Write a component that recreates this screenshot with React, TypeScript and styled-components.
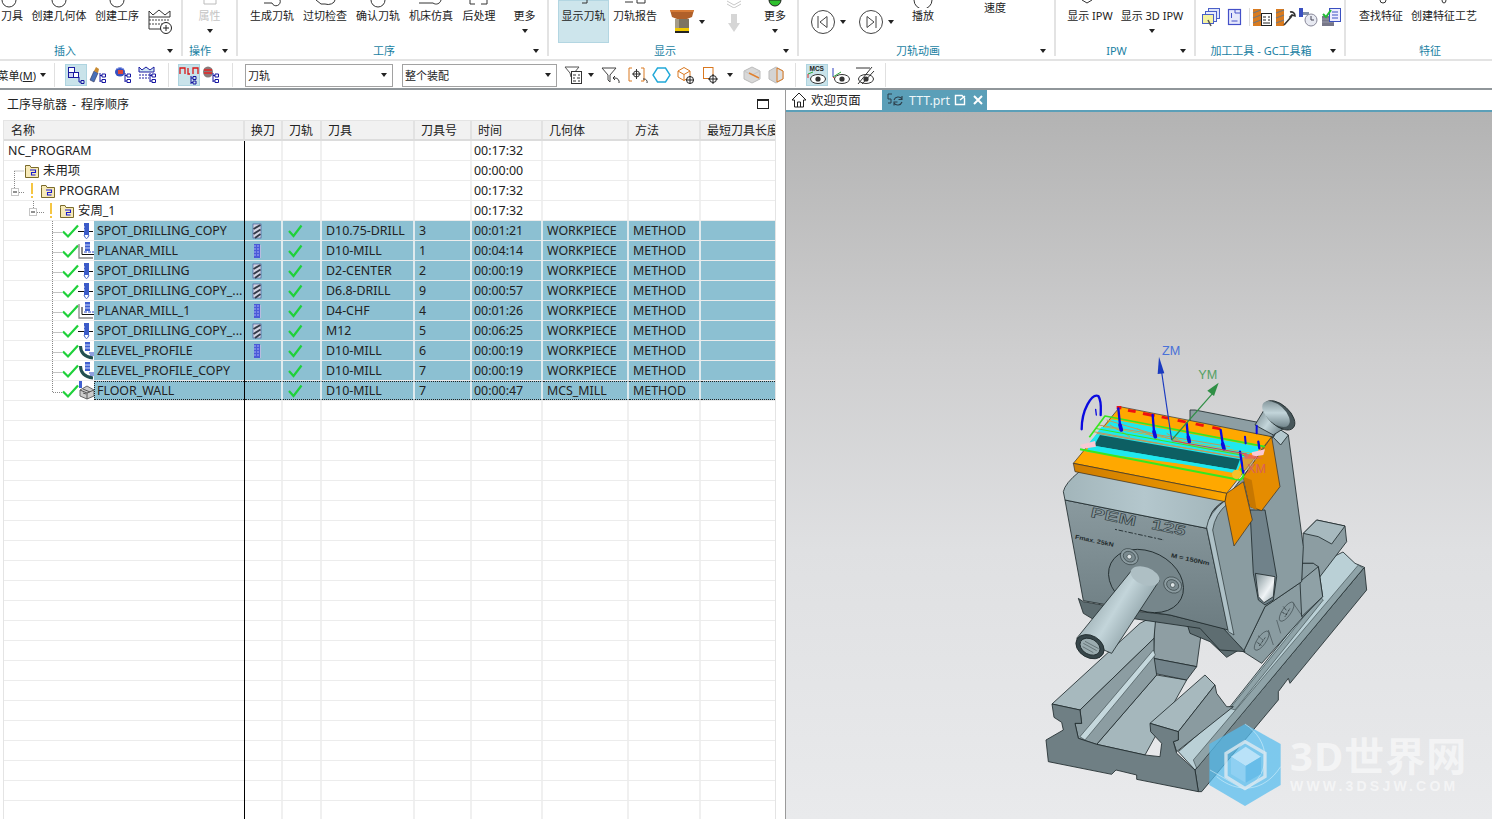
import React from "react";
import styled, { createGlobalStyle } from "styled-components";

const Global = createGlobalStyle`
  html, body { margin: 0; padding: 0; background: #fff; overflow: hidden; }
  body { font-family: "Noto Sans", "Noto Sans CJK SC", "Liberation Sans", sans-serif; color: #222; }
  #root { width: 1492px; height: 819px; overflow: hidden; }
`;

const Page = styled.div`
  width: 1492px; height: 819px; display: flex; flex-direction: column; overflow: hidden;
`;
const Ribbon = styled.div`
  display: flex; height: 59px; flex: none; background: #fff; border-bottom: 2px solid #e3e3e3; box-sizing: content-box;
`;
const Group = styled.div<{ $w: number; $last?: boolean }>`
  width: ${p => p.$w}px; flex: none; display: flex; flex-direction: column; box-sizing: border-box;
  height: 56px;
  border-right: ${p => (p.$last ? "none" : "2px solid #e3e3e3")};
`;
const Items = styled.div<{ $pad?: number }>`
  display: flex; height: 43px; flex: none; padding-left: ${p => p.$pad || 0}px;
  margin-bottom: 1px;
`;
const Item = styled.div<{ $w: number; $sel?: boolean; $dis?: boolean }>`
  width: ${p => p.$w}px; flex: none; display: flex; flex-direction: column; align-items: center; box-sizing: border-box;
  font-size: 11px; line-height: 16px; white-space: nowrap;
  color: ${p => (p.$dis ? "#c4c4c4" : "#222")};
  background: ${p => (p.$sel ? "#cde5ec" : "transparent")};
  ${p => p.$sel && "box-shadow: inset 0 0 0 1px #b3d6e2;"}
`;
const Stub = styled.svg`
  display: block; flex: none; width: 24px; height: 8px;
`;
const Drop = styled.span<{ $c?: string; $m?: number }>`
  display: inline-block; width: 0; height: 0; flex: none;
  border-left: 3.5px solid transparent; border-right: 3.5px solid transparent;
  border-top: 4px solid ${p => p.$c || "#222"};
  margin-top: ${p => p.$m ?? 0}px;
`;
const LabelRow = styled.div<{ $arrow?: number }>`
  display: flex; align-items: center; height: 13px; padding-right: ${p => p.$arrow ?? 8}px;
`;
const GroupLabel = styled.span<{ $w: number }>`
  width: ${p => p.$w}px; flex: none; text-align: center; color: #1a7fa3; font-size: 11px; line-height: 13px; white-space: nowrap;
`;
const Grow = styled.span`flex: 1;`;
const IconCell = styled.div<{ $w: number; $top?: number }>`
  width: ${p => p.$w}px; flex: none; display: flex; align-items: ${p => (p.$top !== undefined ? "flex-start" : "center")};
  justify-content: center; height: 43px; box-sizing: border-box; padding-top: ${p => p.$top ?? 0}px;
`;
const DropRight = styled.div`
  display: flex; align-items: center; gap: 4px;
`;
const ColCell = styled.div<{ $w: number }>`
  width: ${p => p.$w}px; flex: none; display: flex; flex-direction: column; align-items: center;
`;
const SpeedText = styled.span`
  font-size: 11px; line-height: 16px;
`;
const ToolSep = styled.span`
  width: 1px; height: 18px; background: #ddd; flex: none; display: block;
`;

/* toolbar */
const Toolbar = styled.div`
  display: flex; align-items: center; height: 26px; padding-top: 1px; flex: none; background: #fff; border-bottom: 2px solid #90969a;
`;
const Slot = styled.div<{ $w: number; $sel?: boolean }>`
  width: ${p => p.$w}px; height: 22px; flex: none; display: flex; align-items: center; justify-content: center;
  box-sizing: border-box;
  background: ${p => (p.$sel ? "#c9e3ea" : "transparent")};
  ${p => p.$sel && "box-shadow: inset 0 0 0 1px #aed4e0;"}
`;
const Sep = styled.span`
  width: 1px; height: 24px; flex: none; background: #e0e0e0;
`;
const MenuText = styled.div`
  width: 36px; flex: none; overflow: hidden; white-space: nowrap; font-size: 11px; direction: rtl; text-align: left;
  span { direction: ltr; display: inline-block; }
  u { text-underline-offset: 1px; }
`;
const Select = styled.div<{ $w: number }>`
  width: ${p => p.$w}px; height: 23px; flex: none; box-sizing: border-box; border: 1px solid #a2a2a2;
  display: flex; align-items: center; justify-content: space-between; padding: 0 5px 0 2px; font-size: 11px;
`;

/* main */
const Main = styled.div`
  flex: 1; display: flex; min-height: 0;
`;
const Navigator = styled.div`
  width: 785px; flex: none; display: flex; flex-direction: column; background: #fff; border-right: 1px solid #9a9a9a; box-sizing: content-box;
`;
const NavTitle = styled.div`
  height: 30px; flex: none; display: flex; align-items: center; justify-content: space-between;
  padding: 0 16px 2px 7px; font-size: 12px; box-sizing: border-box; word-spacing: 2px;
`;
const MaxBox = styled.span`
  width: 12px; height: 10px; border: 1px solid #222; border-top-width: 2px; box-sizing: border-box; display: block;
`;
const Table = styled.div`
  margin-left: 3px; width: 773px; flex: 1; border: 1px solid #e4e4e4; border-bottom: none; box-sizing: border-box; overflow: hidden;
`;
const cols = "241px 38px 39px 93px 57px 71px 86px 72px 74px";
const Header = styled.div`
  display: grid; grid-template-columns: ${cols}; height: 20px; background: #f1f1f1; border-bottom: 2px solid #dcdcdc; box-sizing: border-box;
`;
const HeadCell = styled.div`
  font-size: 12px; line-height: 19px; padding-left: 6px; border-right: 2px solid #e2e2e2; white-space: nowrap; overflow: hidden;
  &:first-child { padding-left: 7px; }
  &:last-child { border-right: none; }
`;
const Row = styled.div`
  display: grid; grid-template-columns: ${cols}; height: 20px; box-sizing: border-box; border-bottom: 1px solid #ececec;
`;
const NameCell = styled.div`
  display: flex; align-items: flex-start; border-right: 1px solid #000; min-width: 0; height: 20px; margin-bottom: -1px;
`;
const NameLabel = styled.div<{ $sel?: boolean; $focus?: boolean }>`
  flex: 1; min-width: 0; height: 19px; line-height: 19px; font-size: 12.4px; white-space: nowrap; overflow: hidden; padding-left: 3px; box-sizing: border-box;
  background: ${p => (p.$sel ? "#8cc0d2" : "transparent")};
  ${p => p.$focus && "border-top: 1px dotted #222; border-bottom: 1px dotted #222; border-left: 1px dotted #222; line-height: 17px; padding-left: 2px;"}
`;
const Cell = styled.div<{ $sel?: boolean; $pad?: number; $focus?: boolean }>`
  height: 19px; line-height: 19px; font-size: 12.4px; white-space: nowrap; overflow: hidden; box-sizing: border-box;
  padding-left: ${p => p.$pad ?? 4}px; border-right: 2px solid ${p => (p.$sel ? "#dfeaee" : "#f0f0f0")};
  background: ${p => (p.$sel ? "#8cc0d2" : "transparent")};
  display: flex; align-items: center;
  ${p => p.$focus && "border-top: 1px dotted #222; border-bottom: 1px dotted #222;"}
  &:last-child { border-right: none; }
`;
const Gutter = styled.svg<{ $w: number }>`
  width: ${p => p.$w}px; height: 20px; flex: none; display: block; overflow: visible;
`;

/* viewer */
const Viewer = styled.div`
  flex: 1; display: flex; flex-direction: column; min-width: 0;
`;
const Tabs = styled.div`
  height: 22px; flex: none; display: flex; background: #fff; box-sizing: border-box; border-bottom: 2px solid #5b9fb8;
`;
const Tab = styled.div<{ $w: number; $active?: boolean }>`
  width: ${p => p.$w}px; height: 20px; flex: none; display: flex; align-items: center; font-size: 12.4px; box-sizing: border-box; white-space: nowrap;
  gap: 4px; padding-left: 5px;
  background: ${p => (p.$active ? "#5b9fb8" : "#fff")};
  color: ${p => (p.$active ? "#eef6f9" : "#222")};
`;
const Stage = styled.div`
  flex: 1; position: relative; overflow: hidden; background: linear-gradient(180deg, #b3b3b3 0%, #cfcfd0 35%, #dfe0e2 62%, #e9eaec 100%);
`;
const Scene = styled.svg`
  position: absolute; left: 0; top: 0; width: 706px; height: 707px;
`;
const Watermark = styled.div`
  position: absolute; left: 504px; top: 623px; display: flex; flex-direction: column;
  color: rgba(255,255,255,.55); font-weight: 700; white-space: nowrap;
`;
const MarkBig = styled.div`
  font-family: "Noto Sans", "Noto Sans CJK SC", sans-serif; font-size: 40px; line-height: 42px; height: 43px; letter-spacing: 1px;
`;
const MarkSmall = styled.div`
  font-family: "Liberation Sans", sans-serif; font-size: 14px; line-height: 16px; letter-spacing: 3.2px;
`;

/* icons */
const Arc = ({ d = "M5 0 A7 7 0 0 0 19 0" }: { d?: string }) => (
  <Stub viewBox="0 0 24 8"><path d={d} fill="none" stroke="#333" strokeWidth="1" /></Stub>
);
const Blank = () => <Stub viewBox="0 0 24 8" />;

const S = ({ children, w = 20, h = 20 }: { children: React.ReactNode; w?: number; h?: number }) => (
  <svg width={w} height={h} viewBox={`0 0 ${w} ${h}`} style={{ display: "block", flex: "none" }}>{children}</svg>
);

const CavityIcon = () => (
  <S w={26} h={30}>
    <path d="M2 6 L6 10 L12 5 L18 10 L23 6 V12 H2 Z" fill="none" stroke="#333" />
    <path d="M2 15 H23 M2 19 H23" stroke="#444" strokeWidth="1.2" strokeDasharray="2 1" />
    <path d="M2 12 V24 H14" fill="none" stroke="#333" />
    <circle cx="19" cy="23" r="5.5" fill="#fff" stroke="#222" />
    <path d="M16 23 H22 M19 20 V26" stroke="#222" />
  </S>
);
const ToolStack = () => (
  <S w={26} h={24}>
    <path d="M7 15 L13 24 L19 15 H16 V6 H10 V15 Z" fill="#d6d6d6" />
  </S>
);
const CutterIcon = () => (
  <S w={26} h={25}>
    <path d="M1 1 H25 L23 8 L18 10 H8 L3 8 Z" fill="#b0602a" />
    <path d="M1 1 H25 L24 3 H2 Z" fill="#d67a36" />
    <rect x="6" y="10" width="14" height="9" fill="#7d7462" />
    <rect x="6" y="10" width="4" height="9" fill="#a59c88" />
    <rect x="6" y="19" width="14" height="3" fill="#f0c800" />
    <rect x="6" y="22" width="14" height="2" fill="#222" />
  </S>
);
const Nav = ({ next }: { next?: boolean }) => (
  <S w={26} h={26}>
    <circle cx="13" cy="13" r="11.5" fill="#fff" stroke="#444" />
    {next ? <path d="M9 7.5 L16 13 L9 18.5 Z M18 7 V19" fill="none" stroke="#444" /> : <path d="M17 7.5 L10 13 L17 18.5 Z M8 7 V19" fill="none" stroke="#444" />}
  </S>
);

const TreeIc = ({ kind }: { kind: number }) => {
  const tree = <path d="M12 9 V18 M12 11.5 H14 M12 17 H14 M14 10 h3.5 v3 h-3.5 z M14 15.5 h3.5 v3 h-3.5 z" fill="none" stroke="#1414a0" />;
  return (
    <S w={22} h={22}>
      {kind === 0 && <><rect x="3.5" y="3.5" width="6" height="5" fill="#fff" stroke="#1a1aa0" /><rect x="3.5" y="8.5" width="6" height="5" fill="#cdd3f2" stroke="#1a1aa0" /><rect x="8.5" y="8.5" width="5" height="5" fill="#fff" stroke="#1a1aa0" /><path d="M14 13 V18 H16 M16 16.5 h3 v3 h-3z" fill="none" stroke="#1414a0" /></>}
      {kind === 1 && <><path d="M2 16 L6 7 L10 9 L6 18 Z" fill="#4870b8" stroke="#335" strokeWidth=".6" /><path d="M6 7 L8 3 L11 5 L10 9 Z" fill="#c88a30" />{tree}</>}
      {kind === 2 && <><ellipse cx="7" cy="8" rx="5" ry="4.5" fill="#3650c0" /><rect x="5" y="6" width="5" height="4" fill="#d9463c" /><path d="M3 5 Q7 2 11 5" stroke="#8fa0e8" fill="none" />{tree}</>}
      {kind === 3 && <><path d="M1 3 L4 6 L8 3 L12 6 L16 3 V8 H1 Z" fill="#cfe6f2" stroke="#1a1aa0" /><path d="M1 11 H14 M1 14 H11" stroke="#1a1aa0" strokeDasharray="2 1" />{tree}</>}
      {kind === 4 && <><path d="M2 10 V4 H7 V10 M10 4 V10 H12 M15 10 V4 H20 V10" fill="none" stroke="#d81818" strokeWidth="1.3" /><path d="M13 12 V20 M13 14 H15 M13 18.5 H15 M15 12.5 h3 v3 h-3 z M15 17 h3 v3 h-3 z" fill="none" stroke="#1414a0" /></>}
      {kind === 5 && <><ellipse cx="7" cy="8" rx="5" ry="5.5" fill="#8a7a7a" /><path d="M3 6 H11 M3 9 H11" stroke="#d03838" strokeWidth="1.8" />{tree}</>}
    </S>
  );
};
const FilterIc = ({ kind }: { kind: number }) => (
  <S w={24} h={20}>
    {kind === 0 && <><path d="M2 2 H16 L11 8 V12 L8 12 L7 8 Z" fill="none" stroke="#555" /><rect x="8.5" y="6.5" width="10" height="12" fill="#fff" stroke="#333" /><path d="M10 10 h3 M15 10 h2 M10 13 h2 M14 13 h3 M10 16 h3 M15 16 h2" stroke="#333" /></>}
    {kind === 1 && <><path d="M3 3 H17 L11 10 V17 L9 15 V10 Z" fill="#fff" stroke="#444" /><path d="M20 18 a4 4 0 0 0 -4 -5 l-2 0 m2 -2 l-2 2 l2 2" fill="none" stroke="#333" /></>}
    {kind === 2 && <><path d="M7 3 H4 V16 H7 M16 3 H19 V16 H16" fill="none" stroke="#d97820" /><circle cx="11.5" cy="9" r="3" fill="none" stroke="#333" /><path d="M7 9 H16 M11.5 4 V14" stroke="#333" /><path d="M22 18 a3 3 0 0 0 -3 -4 l-1 0" fill="none" stroke="#333" /></>}
    {kind === 3 && <path d="M7.5 3 H15.5 L20 10 L15.5 17 H7.5 L3 10 Z" fill="none" stroke="#20a8d8" strokeWidth="1.4" />}
    {kind === 4 && <><path d="M3 6 L9 2.5 L15 6 V12 L9 15.5 L3 12 Z M3 6 L9 9.5 L15 6 M9 9.5 V15.5" fill="#fff" stroke="#d97820" /><circle cx="15" cy="15" r="3.5" fill="#fff" stroke="#222" /><path d="M11 15 H19 M15 11 V19" stroke="#222" /></>}
    {kind === 5 && <><rect x="2.5" y="2.5" width="9.5" height="11" fill="#fff" stroke="#d97820" /><circle cx="12" cy="14" r="3.5" fill="#fff" stroke="#222" /><path d="M7 14 H17 M12 9 V19" stroke="#222" /></>}
    {kind === 6 && <><path d="M4 6 L12 2 L20 6 V14 L12 18 L4 14 Z" fill="#d8d8d8" stroke="#bbb" /><path d="M4 6 L12 10 L20 6" fill="none" stroke="#c6c6c6" /><path d="M9 8 L19 13" stroke="#e08030" strokeWidth="1.4" /></>}
    {kind === 7 && <><path d="M5 6 L12 2 L19 6 V14 L12 18 L5 14 Z" fill="#d4d4d4" stroke="#bbb" /><path d="M13 3 L19 6 V14 L13 17 Z" fill="#ddd" stroke="#d97820" /></>}
  </S>
);
const Mcs = ({ kind }: { kind: number }) => (
  <S w={24} h={22}>
    {kind === 0 && <text x="4.5" y="7" fontSize="6.5" fontWeight="700" fill="#222" fontFamily="Liberation Sans">MCS</text>}
    {kind === 1 && <><path d="M4 4 V13" stroke="#3040c0" /><path d="M4 13 L12 8" stroke="#2aa838" /><path d="M4 13 L8 16" stroke="#d83030" /></>}
    {kind === 0 && <><path d="M3 10 L8 8" stroke="#2aa838" /><path d="M3 10 V14" stroke="#d83030" /></>}
    <ellipse cx="13" cy="15" rx="7.5" ry="4.5" fill="#fff" stroke="#333" />
    <circle cx="13" cy="15" r="2.6" fill="#333" />
    {kind === 2 && <path d="M5 20 L19 3 M3 4 H17 M9 20 L21 7" stroke="#333" />}
  </S>
);
const CadIc = ({ kind }: { kind: number }) => (
  <S w={23} h={22}>
    {kind === 0 && <><rect x="9.5" y="2.5" width="11" height="10" fill="#dfe4f8" stroke="#4a60c8" /><rect x="6.5" y="5.5" width="11" height="10" fill="#e8ecfb" stroke="#4a60c8" /><rect x="3.5" y="8.5" width="11" height="9" fill="#f5f3a0" stroke="#4a60c8" /><path d="M9 14 L12 20" stroke="#555" strokeWidth="1.5" /></>}
    {kind === 1 && <><rect x="5.5" y="3.5" width="12" height="15" fill="#e6e8fb" stroke="#4450c8" strokeWidth="1.2" /><path d="M8.5 7 V12 M8.5 15 H14.5 M12 3.5 V7 H17" fill="none" stroke="#4450c8" /></>}
    {kind === 2 && <><rect x="2" y="3" width="8" height="17" fill="#d97b20" /><path d="M2 7 L10 4 M2 12 L10 9 M2 17 L10 14" stroke="#777" strokeWidth="1.2" /><rect x="10.5" y="7.5" width="10" height="12" fill="#fff" stroke="#222" /><path d="M12 11 h3 M17 11 h2 M12 14 h3 M17 14 h2 M12 17 h7" stroke="#222" /></>}
    {kind === 3 && <><rect x="2" y="3" width="8" height="17" fill="#d97b20" /><path d="M2 7 L10 4 M2 12 L10 9 M2 17 L10 14" stroke="#777" strokeWidth="1.2" /><path d="M10 19 L18 10 M16 6 a4 4 0 0 1 5 4 l-3 -1 l-2 2 l1 1" fill="none" stroke="#333" strokeWidth="1.6" /></>}
    {kind === 4 && <><rect x="2" y="2" width="4" height="9" fill="#3a50c0" /><rect x="6" y="6" width="6" height="3" fill="#8090a8" /><circle cx="14" cy="14" r="6" fill="#e8eaf2" stroke="#889" /><path d="M14 10 V14 H17" stroke="#445" fill="none" /></>}
    {kind === 5 && <><rect x="2" y="10" width="12" height="10" fill="#778" /><path d="M2 13 H14 M2 16 H14" stroke="#99a" /><rect x="9.5" y="2.5" width="11" height="13" fill="#eef" stroke="#3a50c0" /><path d="M12 6 H18 M12 9 H18 M12 12 H18" stroke="#3a50c0" /><path d="M3 8 L6 11 L11 4" stroke="#22bb33" strokeWidth="2" fill="none" /></>}
  </S>
);

const Folder = ({ x }: { x: number }) => (
  <g transform={`translate(${x},4)`}>
    <path d="M0.5 2.5 V0.5 H5 L6 2.5 H13.5 V12.5 H0.5 Z" fill="#f7eab8" stroke="#7a6a2a" />
    <path d="M5 5 H10.5 V7.5 H6.5 V10 H10.5" fill="none" stroke="#1a1ad0" strokeWidth="1.1" />
  </g>
);
const Minus = ({ x }: { x: number }) => (
  <g>
    <rect x={x + .5} y="7.5" width="7" height="7" fill="#fff" stroke="#c6c6c6" />
    <path d={`M${x + 2} 11 H${x + 6}`} stroke="#222" />
  </g>
);
const dotted = { stroke: "#888", strokeDasharray: "1 1", fill: "none" } as const;
const Bang = ({ x }: { x: number }) => (
  <g fill="#f5c542"><rect x={x} y="2" width="2" height="11" /><rect x={x} y="15" width="2" height="2" /></g>
);

const OpIcon = ({ t }: { t: string }) => {
  if (t === "d")
    return (
      <g transform="translate(74,2)">
        <path d="M0 8.5 H15" stroke="#111" />
        <rect x="6" y="0" width="5" height="12" fill="#3a5ac8" />
        <path d="M6 4 H7 M6 7 H7" stroke="#cfd8ff" />
        <path d="M6 12 Q8.5 19 11 12" fill="#fff" stroke="#3a5ac8" />
      </g>
    );
  if (t === "p")
    return (
      <g transform="translate(74,0)">
        <path d="M1 3 V17 H15" fill="none" stroke="#888" strokeWidth="1.3" />
        <path d="M4 13.5 H16 M4 6 V13.5" fill="none" stroke="#111" />
        <path d="M6 11 H16" stroke="#2040c0" strokeDasharray="3 1" />
        <rect x="7" y="1" width="5" height="9" fill="#4060d0" />
        <path d="M7 4 h5 M7 7 h5" stroke="#cfd8ff" />
      </g>
    );
  if (t === "z")
    return (
      <g transform="translate(74,0)">
        <path d="M2.5 5 C2.5 12 7 16 15 17" fill="none" stroke="#245050" strokeWidth="3" />
        <rect x="7" y="1" width="5" height="9" fill="#4060d0" />
        <path d="M7 4 h5 M7 7 h5" stroke="#cfd8ff" />
        <path d="M11 12 H16 M12 14 H16" stroke="#2040c0" />
      </g>
    );
  return (
    <g transform="translate(75,0)">
      <rect x="0" y="0" width="3" height="7" fill="#4060d0" />
      <path d="M1 9 L8 5 L15 9 V15 L8 18 L1 15 Z" fill="#ccc" stroke="#666" />
      <path d="M1 9 L8 12 L15 9 M8 12 V18 M4 8 L11 11 M4 12 L7 13" fill="none" stroke="#555" />
    </g>
  );
};

const Check = ({ x = 59 }: { x?: number }) => (
  <path d={`M${x} 10.5 L${x + 5} 15.5 L${x + 15} 4.5`} fill="none" stroke="#1fd13a" strokeWidth="2.2" />
);

const DrillTool = () => (
  <S w={12} h={16}>
    <rect x="2" y="1" width="8" height="14" fill="#d2d4e2" stroke="#3a4a90" strokeWidth=".6" />
    <path d="M2.5 6 L9.5 2 M2.5 11 L9.5 6.5 M4 15 L9.5 11" stroke="#333a48" strokeWidth="1.9" />
  </S>
);
const MillTool = () => (
  <S w={12} h={16}>
    <rect x="3" y="1" width="6" height="14" fill="#4a5ad8" />
    <path d="M3 3 h6 M3 6 h6 M3 9 h6 M3 12 h6" stroke="#a4b0f4" strokeDasharray="2 1" />
    <path d="M9.5 2 v13" stroke="#b8bce0" />
  </S>
);
const PathCheck = () => (
  <S w={18} h={16}>
    <path d="M3 8 L7.5 13 L15.5 2.5" fill="none" stroke="#1fd13a" strokeWidth="2.2" />
  </S>
);

const MiniTabIc = () => (
  <S w={16} h={16}>
    <path d="M8 1 L1 8 H3.5 V15 H12.5 V8 H15 Z M6.5 15 V10 H9.5 V15" fill="#fff" stroke="#222" />
  </S>
);
const PartIc = () => (
  <S w={18} h={16}>
    <path d="M5 2 H1 V7 H4 V11 H1" fill="none" stroke="#2c3e4a" />
    <path d="M7 8 a4.5 4.5 0 0 1 8 -1 M15 10 a4.5 4.5 0 0 1 -8 1 M15 4 V7.5 H11.5 M7 13.5 V10 H10.5" fill="none" stroke="#2c3e4a" strokeWidth="1.1" />
  </S>
);

type Op = { name: string; icon: string; tool: string; toolIc?: "d" | "m"; no: string; time: string; geo: string };
const ops: Op[] = [
  { name: "SPOT_DRILLING_COPY", icon: "d", toolIc: "d", tool: "D10.75-DRILL", no: "3", time: "00:01:21", geo: "WORKPIECE" },
  { name: "PLANAR_MILL", icon: "p", toolIc: "m", tool: "D10-MILL", no: "1", time: "00:04:14", geo: "WORKPIECE" },
  { name: "SPOT_DRILLING", icon: "d", toolIc: "d", tool: "D2-CENTER", no: "2", time: "00:00:19", geo: "WORKPIECE" },
  { name: "SPOT_DRILLING_COPY_...", icon: "d", toolIc: "d", tool: "D6.8-DRILL", no: "9", time: "00:00:57", geo: "WORKPIECE" },
  { name: "PLANAR_MILL_1", icon: "p", toolIc: "m", tool: "D4-CHF", no: "4", time: "00:01:26", geo: "WORKPIECE" },
  { name: "SPOT_DRILLING_COPY_...", icon: "d", toolIc: "d", tool: "M12", no: "5", time: "00:06:25", geo: "WORKPIECE" },
  { name: "ZLEVEL_PROFILE", icon: "z", toolIc: "m", tool: "D10-MILL", no: "6", time: "00:00:19", geo: "WORKPIECE" },
  { name: "ZLEVEL_PROFILE_COPY", icon: "z", tool: "D10-MILL", no: "7", time: "00:00:19", geo: "WORKPIECE" },
  { name: "FLOOR_WALL", icon: "f", tool: "D10-MILL", no: "7", time: "00:00:47", geo: "MCS_MILL" },
];
const heads = ["名称", "换刀", "刀轨", "刀具", "刀具号", "时间", "几何体", "方法", "最短刀具长度"];

const EmptyCells = ({ time }: { time?: string }) => (
  <>
    <Cell /><Cell /><Cell /><Cell />
    <Cell $pad={2}>{time}</Cell>
    <Cell /><Cell /><Cell />
  </>
);

const edge = { stroke: "#1f2a2c", strokeWidth: 2.5, strokeLinejoin: "round" } as const;

const Vise = () => (
  <Scene viewBox="786 112 706 707">
    <defs>
      <linearGradient id="cyl" x1="0" y1="0" x2="1" y2="0.6">
        <stop offset="0" stopColor="#6f8085" />
        <stop offset=".55" stopColor="#c3d5da" />
        <stop offset="1" stopColor="#768a90" />
      </linearGradient>
      <linearGradient id="plate" x1="0" y1="0" x2="0" y2="1">
        <stop offset="0" stopColor="#8a9a9f" />
        <stop offset="1" stopColor="#6c7c81" />
      </linearGradient>
      <linearGradient id="hole" x1="0" y1="0" x2="1" y2="1">
        <stop offset="0" stopColor="#7d8f94" />
        <stop offset=".6" stopColor="#f0f4f6" />
        <stop offset="1" stopColor="#92a4a9" />
      </linearGradient>
      <linearGradient id="bevel" x1="0" y1="0" x2="1" y2="0">
        <stop offset="0" stopColor="#a2b5ba" />
        <stop offset=".5" stopColor="#b4c7cd" />
        <stop offset="1" stopColor="#a2b5ba" />
      </linearGradient>
      <linearGradient id="lip" x1="0" y1="0" x2="1" y2="0">
        <stop offset="0" stopColor="#cf7d00" />
        <stop offset=".75" stopColor="#e89400" />
        <stop offset="1" stopColor="#ffa800" />
      </linearGradient>
    </defs>

    {/* base — reference crop at (1030,560) */}
    <g transform="translate(1030,560) scale(.33333)" {...edge}>
      <polygon points="495,630 1003,22 1010,90 780,370 775,355 745,395 745,420 515,695 505,695" fill="#75868b" />
      <polygon points="445,575 600,440 870,100 860,15 939,-24 975,10 1003,22 495,630" fill="#bad0d6" />
      <polygon points="490,600 985,15 1000,25 500,625" fill="#8fa3a8" strokeWidth="1.5" />
      <polygon points="600,445 870,110 880,120 615,450" fill="#8fa3a8" strokeWidth="1.5" />
      <polygon points="200,553 380,345 470,360 345,585" fill="#a5b7bc" />
      <polygon points="375,170 370,295 500,320 515,210" fill="#8e9ea3" />
      <polygon points="370,295 372,340 470,360 500,320" fill="#72838a" />
      <polygon points="66,432 330,190 378,165 372,235 150,450" fill="#a7b9be" />
      <polygon points="150,450 155,490 135,490 145,535 200,553 380,345 372,290 372,235" fill="#8c9da2" />
      <polygon points="150,530 370,270 376,285 165,540" fill="#c5d8dd" strokeWidth="1.5" />
      <polygon points="360,490 525,345 555,375 445,515" fill="#a7b9be" />
      <polygon points="445,515 445,540 430,545 440,575 610,440 590,440 560,400 555,375" fill="#8a9ba0" />
      <polygon points="48,540 100,510 95,487 72,472 66,432 150,450 155,490 135,490 145,535 200,553 345,585 390,590 395,550 362,515 360,490 445,515 445,540 430,545 440,580 495,630 505,695 320,658 320,645 258,630 245,643 55,605" fill="#6f7f84" />
    </g>

    {/* body right of the plate — reference crop at (1190,400) */}
    <g transform="translate(1190,400) scale(.33333)" {...edge}>
      <polygon points="340,400 380,360 465,378 470,425 390,530 370,490 335,490" fill="#8c9da2" />
      <polygon points="340,400 380,360 465,378 425,432 385,410" fill="#a7b9be" />
      <polygon points="335,490 370,490 385,500 398,590 340,650 215,790 160,755 225,620 335,545" fill="#8a9ca1" />
      <polygon points="335,650 398,590 385,500 330,545" fill="#8fa1a6" />
      <polygon points="0,30 15,30 245,75 250,112 0,70" fill="#8d9ea3" />
      <polygon points="55,345 105,300 250,110 262,85 295,105 340,440 335,545 225,620 160,755 90,690 60,430" fill="#8a9ca1" />
      <polygon points="250,112 265,85 295,105 272,135" fill="#b5c9cf" />
      <polygon points="180,330 225,330 260,530 250,600 225,615 205,600 190,520" fill="#70828a" />
      <polygon points="196,520 255,530 250,590 222,608 205,590" fill="url(#hole)" />
      <polygon points="-10,668 60,680 90,690 155,745 110,772 60,725 0,700" fill="#5e6d71" />
      <polygon points="195,75 225,25 290,80 250,105" fill="url(#cyl)" />
      <ellipse cx="268" cy="46" rx="56" ry="31" transform="rotate(42 268 46)" fill="#47565a" />
      <ellipse cx="258" cy="42" rx="50" ry="27" transform="rotate(42 258 42)" fill="url(#cyl)" stroke="none" />
      <g fill="none" stroke="#2a3538" strokeWidth="1.5">
        <ellipse cx="290" cy="635" rx="13" ry="34" transform="rotate(35 290 635)" />
        <ellipse cx="215" cy="722" rx="13" ry="34" transform="rotate(35 215 722)" />
        <path d="M280 620 L290 632 M275 636 L292 645 M285 650 L300 625 M205 708 L218 720 M200 726 L214 736 M208 738 L226 712" strokeWidth="3" strokeDasharray="3 2" />
        <path d="M310 610 L338 650 M260 660 L272 700 M235 690 L250 735" />
      </g>
    </g>

    {/* front plate and handle — reference crop at (1040,450) */}
    <g transform="translate(1040,450) scale(.33333)" {...edge}>
      <polygon points="115,445 130,455 300,485 390,495 550,535 615,605 540,600 480,535 240,500 180,520 130,490" fill="#5e6d71" />
      <polygon points="75,150 500,235 565,540 390,495 300,482 130,452" fill="url(#plate)" />
      <path d="M118 65 L555 152 Q520 170 510 200 L500 235 L75 150 L70 125 Q75 100 118 65 Z" fill="url(#bevel)" />
      <path d="M500 232 Q505 190 555 152 L562 162 Q525 192 518 240 L582 555 L565 545 Z" fill="#aec1c7" strokeWidth="2" />
      <ellipse cx="318" cy="393" rx="118" ry="88" transform="rotate(27 318 393)" fill="#76868b" />
      <g strokeWidth="1.5">
        <ellipse cx="268" cy="320" rx="28" ry="23" transform="rotate(30 268 320)" fill="#8b9ba0" />
        <ellipse cx="268" cy="320" rx="19" ry="15" transform="rotate(30 268 320)" fill="#7b8b90" />
        <circle cx="268" cy="320" r="7" fill="#dce4e6" />
        <ellipse cx="398" cy="405" rx="28" ry="23" transform="rotate(30 398 405)" fill="#8b9ba0" />
        <ellipse cx="398" cy="405" rx="19" ry="15" transform="rotate(30 398 405)" fill="#7b8b90" />
        <circle cx="398" cy="405" r="7" fill="#dce4e6" />
      </g>
      <polygon points="272,365 358,392 215,610 110,565" fill="url(#cyl)" />
      <ellipse cx="315" cy="378" rx="45" ry="26" transform="rotate(20 315 378)" fill="#aebfc4" stroke="none" />
      <ellipse cx="150" cy="590" rx="45" ry="33" transform="rotate(30 150 590)" fill="#37464a" />
      <ellipse cx="150" cy="590" rx="32" ry="23" transform="rotate(30 150 590)" fill="#9aabaf" />
      <path d="M130 580 L170 602 M135 574 L176 596 M128 590 L160 608" stroke="#4b595c" strokeWidth="2" fill="none" />
      <g stroke="none" fontFamily="Liberation Sans">
        <text x="150" y="200" fontSize="42" fontWeight="700" fill="none" stroke="#2a3538" strokeWidth="1.5" textLength="138" lengthAdjust="spacingAndGlyphs" transform="rotate(12 150 200)">PEM</text>
        <text x="332" y="236" fontSize="42" fontWeight="700" fill="none" stroke="#2a3538" strokeWidth="1.5" textLength="104" lengthAdjust="spacingAndGlyphs" transform="rotate(12 332 236)">125</text>
        <text x="104" y="266" fontSize="18" fontWeight="700" fill="#1f2a2c" textLength="118" lengthAdjust="spacingAndGlyphs" transform="rotate(12 104 266)">Fmax. 25kN</text>
        <text x="392" y="322" fontSize="18" fontWeight="700" fill="#1f2a2c" textLength="118" lengthAdjust="spacingAndGlyphs" transform="rotate(12 392 322)">M = 150Nm</text>
        <path d="M225 238 L372 270" stroke="#2a3538" strokeWidth="3" strokeDasharray="6 5 14 5" fill="none" />
      </g>
    </g>

    {/* workpiece and tool paths — reference crop at (1030,330) */}
    <g transform="translate(1030,330) scale(.33333)" strokeLinejoin="round">
      <polygon points="640,440 725,320 750,470 695,542 660,530" fill="#e58c00" stroke="#2b2b2b" strokeWidth="2" />
      <polygon points="640,440 660,530 680,540 665,450" fill="#c77700" />
      <polygon points="130,400 270,230 725,320 590,490" fill="#ffa800" stroke="#2b2b2b" strokeWidth="2" />
      <polygon points="130,400 590,490 585,515 135,425" fill="url(#lip)" stroke="#2b2b2b" strokeWidth="2" />
      <polygon points="590,490 640,455 667,570 612,648 585,515" fill="#e58c00" stroke="#2b2b2b" strokeWidth="2" />
      <polygon points="180,335 210,300 640,380 620,430 600,420 170,365" fill="#20e8ee" />
      <polygon points="210,315 630,388 618,420 192,347" fill="#0d5f63" />
      <polygon points="192,347 618,420 616,430 185,355" fill="#20e8ee" />
      <polygon points="245,268 690,350 680,372 225,290" fill="#20e8ee" />
      <polygon points="215,290 660,370 650,385 200,310" fill="#20e8ee" />
      <path d="M205 285 L480 330 L600 350 M200 310 L680 390 M230 270 L500 350 L650 375" stroke="#c09a5a" strokeWidth="3" fill="none" />
      <path d="M190 305 L640 385 M240 285 L300 320 M320 295 L390 330 M410 310 L470 345" stroke="#c09a5a" strokeWidth="3" fill="none" />
      <path d="M150 358 L630 450 Q650 440 632 415" stroke="#35e820" strokeWidth="6" fill="none" />
      <path d="M178 322 L225 258 L705 350" stroke="#35e820" strokeWidth="5" fill="none" />
      <path d="M195 295 L650 378" stroke="#35e820" strokeWidth="3" fill="none" />
      <path d="M150 345 L195 333 L198 350 L160 356 Z M665 367 L705 358 L700 375 L668 380 Z" fill="#f9c9d4" />
      <circle cx="620" cy="433" r="14" fill="#f7c02a" />
      <g fill="#ee1111">
        <rect x="260" y="228" width="14" height="10" />
        <polygon points="295,237 318,241 316,249 293,245" />
        <polygon points="340,246 375,253 373,262 338,255" />
        <polygon points="396,257 418,261 416,269 394,265" />
        <polygon points="444,267 468,272 466,280 442,275" />
        <polygon points="498,278 522,283 520,291 496,286" />
        <polygon points="548,288 572,293 570,301 546,296" />
      </g>
      <g stroke="#0a0ae0" fill="none" strokeLinecap="round">
        <path d="M265 235 L270 285" strokeWidth="7" />
        <path d="M270 285 L274 300" strokeWidth="11" />
        <path d="M368 255 L372 305" strokeWidth="7" />
        <path d="M372 305 L376 320" strokeWidth="11" />
        <path d="M470 280 L474 320" strokeWidth="7" />
        <path d="M475 322 L478 335" strokeWidth="11" />
        <path d="M572 300 L578 340" strokeWidth="7" />
        <path d="M578 342 L582 356" strokeWidth="11" />
        <path d="M645 320 L647 340" strokeWidth="6" />
        <path d="M680 287 L680 310" strokeWidth="6" />
        <path d="M685 335 L688 355" strokeWidth="7" />
        <path d="M630 365 L640 428" strokeWidth="7" />
        <path d="M155 298 C155 240 185 190 205 198 C216 215 212 240 212 255" strokeWidth="7" />
        <path d="M197 238 L199 255" strokeWidth="4" />
      </g>
      <path d="M425 332 L650 372" stroke="#d84040" strokeWidth="3" />
      <polygon points="640,368 700,385 645,388" fill="#e8605a" opacity=".85" />
      <rect x="640" y="385" width="30" height="35" fill="#c09a5a" opacity=".6" />
      <path d="M425 330 L394 120" stroke="#1a3ac0" strokeWidth="3.5" />
      <polygon points="387,80 403,130 383,132" fill="#1a3ac0" />
      <path d="M425 330 L548 190" stroke="#2f8f45" strokeWidth="3.5" />
      <polygon points="566,158 552,198 532,182" fill="#2f8f45" />
      <text x="396" y="74" fontSize="38" fill="#4a72d8" fontFamily="Liberation Sans">ZM</text>
      <text x="505" y="147" fontSize="38" fill="#55a065" fontFamily="Liberation Sans">YM</text>
      <text x="651" y="430" fontSize="38" fill="#d9605a" fontFamily="Liberation Sans">XM</text>
    </g>

    {/* watermark logo */}
    <g transform="translate(1030,560) scale(.33333)">
      <polygon points="645,492 752,552 752,675 645,738 538,675 538,552" fill="#55bdee" opacity=".72" />
      <path d="M645 492 C720 540 730 640 645 690 L540 630 M752 620 C700 700 620 700 560 650" fill="none" stroke="#e6f6fd" strokeWidth="3" opacity=".5" />
      <polygon points="645,545 705,580 705,650 645,685 588,650 588,580" fill="none" stroke="#dfeaf0" strokeWidth="10" opacity=".8" />
      <polygon points="647,560 693,590 647,618 603,590" fill="#b9e2f8" />
      <polygon points="603,590 647,618 647,668 603,642" fill="#8fd0f2" />
      <polygon points="693,590 647,618 647,668 693,642" fill="#68bde9" />
    </g>
  </Scene>
);

export default function App() {
  return (
    <Page>
      <Global />
      <Ribbon>
        <Group $w={183}>
          <Items>
            <Item $w={24}><Arc d="M2 0 A7 7 0 0 0 16 0" />刀具</Item>
            <Item $w={70}><Arc />创建几何体</Item>
            <Item $w={46}><Arc />创建工序</Item>
            <IconCell $w={40} $top={5}><CavityIcon /></IconCell>
          </Items>
          <LabelRow><GroupLabel $w={130}>插入</GroupLabel><Grow /><Drop /></LabelRow>
        </Group>
        <Group $w={55}>
          <Items>
            <Item $w={53} $dis>
              <Stub viewBox="0 0 24 8"><path d="M6 0 V4 H18 V0" fill="none" stroke="#bbb" /></Stub>
              属性
              <Drop $m={5} />
            </Item>
          </Items>
          <LabelRow><GroupLabel $w={34}>操作</GroupLabel><Grow /><Drop /></LabelRow>
        </Group>
        <Group $w={311}>
          <Items $pad={8}>
            <Item $w={52}><Arc d="M4 3 H12 M12 3 A4 4 0 0 0 20 0" />生成刀轨</Item>
            <Item $w={54}><Arc d="M3 0 L8 4 H12 A7 5 0 0 0 22 0" />过切检查</Item>
            <Item $w={52}><Arc />确认刀轨</Item>
            <Item $w={54}><Arc d="M0 3 H14 A5 5 0 0 0 22 0" />机床仿真</Item>
            <Item $w={42}><Arc d="M3 0 V4 H8 M14 4 H20 V0" />后处理</Item>
            <Item $w={49}><Blank />更多<Drop $m={5} /></Item>
          </Items>
          <LabelRow><GroupLabel $w={292}>工序</GroupLabel><Grow /><Drop /></LabelRow>
        </Group>
        <Group $w={250}>
          <Items $pad={9}>
            <Item $w={51} $sel><Arc d="M10 3 H15 V0" />显示刀轨</Item>
            <Item $w={52}><Arc d="M2 2 H10 M14 0 V3 H22 V0" />刀轨报告</Item>
            <IconCell $w={51}>
              <DropRight><CutterIcon /><Drop /></DropRight>
            </IconCell>
            <ColCell $w={44}>
              <Stub viewBox="0 0 24 8"><path d="M5 1 L12 5 L19 1 M5 4 L12 8 L19 4" fill="none" stroke="#c8c8c8" /></Stub>
              <ToolStack />
            </ColCell>
            <Item $w={38}>
              <Stub viewBox="0 0 24 8"><path d="M6 0 A6 6 0 0 0 18 0 Z" fill="#2ec02e" stroke="#222" /></Stub>
              更多
              <Drop $m={5} />
            </Item>
          </Items>
          <LabelRow><GroupLabel $w={232}>显示</GroupLabel><Grow /><Drop /></LabelRow>
        </Group>
        <Group $w={257}>
          <Items $pad={5}>
            <IconCell $w={48}><DropRight><Nav /><Drop /></DropRight></IconCell>
            <IconCell $w={48}><DropRight><Nav next /><Drop /></DropRight></IconCell>
            <Item $w={46}><Arc d="M3 0 A9 9 0 0 0 21 0" />播放</Item>
            <Item $w={98}><SpeedText>速度</SpeedText></Item>
          </Items>
          <LabelRow><GroupLabel $w={238}>刀轨动画</GroupLabel><Grow /><Drop /></LabelRow>
        </Group>
        <Group $w={140}>
          <Items $pad={7}>
            <Item $w={54}><Arc d="M4 0 L9 3 L14 0" />显示 IPW</Item>
            <Item $w={70}><Blank />显示 3D IPW<Drop $m={5} /></Item>
          </Items>
          <LabelRow><GroupLabel $w={121}>IPW</GroupLabel><Grow /><Drop /></LabelRow>
        </Group>
        <Group $w={150}>
          <Items $pad={3}>
            <IconCell $w={22} $top={6}><CadIc kind={0} /></IconCell>
            <IconCell $w={26} $top={6}><CadIc kind={1} /></IconCell>
            <IconCell $w={4} $top={8}><ToolSep /></IconCell>
            <IconCell $w={23} $top={6}><CadIc kind={2} /></IconCell>
            <IconCell $w={23} $top={6}><CadIc kind={3} /></IconCell>
            <IconCell $w={23} $top={6}><CadIc kind={4} /></IconCell>
            <IconCell $w={23} $top={6}><CadIc kind={5} /></IconCell>
          </Items>
          <LabelRow><GroupLabel $w={130}>加工工具 - GC工具箱</GroupLabel><Grow /><Drop /></LabelRow>
        </Group>
        <Group $w={146} $last>
          <Items $pad={9}>
            <Item $w={52}><Arc d="M11 0 A3 3 0 0 0 17 0" />查找特征</Item>
            <Item $w={74}><Arc d="M10 0 A2 3 0 0 0 14 0" />创建特征工艺</Item>
          </Items>
          <LabelRow><GroupLabel $w={168}>特征</GroupLabel></LabelRow>
        </Group>
      </Ribbon>
      <Toolbar>
        <MenuText><span>菜单(<u>M</u>)</span></MenuText>
        <Slot $w={14}><Drop /></Slot>
        <Slot $w={4} /><Sep /><Slot $w={10} />
        <Slot $w={22} $sel><TreeIc kind={0} /></Slot>
        <Slot $w={24}><TreeIc kind={1} /></Slot>
        <Slot $w={26}><TreeIc kind={2} /></Slot>
        <Slot $w={24}><TreeIc kind={3} /></Slot>
        <Slot $w={7} /><Sep /><Slot $w={9} />
        <Slot $w={22} $sel><TreeIc kind={4} /></Slot>
        <Slot $w={24}><TreeIc kind={5} /></Slot>
        <Slot $w={8} /><Sep /><Slot $w={12} />
        <Select $w={148}>刀轨<Drop /></Select>
        <Slot $w={9} />
        <Select $w={155}>整个装配<Drop /></Select>
        <Slot $w={9} />
        <Slot $w={18}><FilterIc kind={0} /></Slot>
        <Slot $w={14}><Drop /></Slot>
        <Slot $w={26}><FilterIc kind={1} /></Slot>
        <Slot $w={26}><FilterIc kind={2} /></Slot>
        <Slot $w={24}><FilterIc kind={3} /></Slot>
        <Slot $w={26}><FilterIc kind={4} /></Slot>
        <Slot $w={26}><FilterIc kind={5} /></Slot>
        <Slot $w={8}><Drop /></Slot>
        <Slot $w={6} />
        <Slot $w={24}><FilterIc kind={6} /></Slot>
        <Slot $w={24}><FilterIc kind={7} /></Slot>
        <Slot $w={7} /><Sep /><Slot $w={10} />
        <Slot $w={22} $sel><Mcs kind={0} /></Slot>
        <Slot $w={26}><Mcs kind={1} /></Slot>
        <Slot $w={22}><Mcs kind={2} /></Slot>
        <Slot $w={9} /><Sep />
      </Toolbar>
      <Main>
        <Navigator>
          <NavTitle><span>工序导航器 - 程序顺序</span><MaxBox /></NavTitle>
          <Table>
            <Header>{heads.map(h => <HeadCell key={h}>{h}</HeadCell>)}</Header>
            <Row>
              <NameCell><Gutter $w={1} /><NameLabel>NC_PROGRAM</NameLabel></NameCell>
              <EmptyCells time="00:17:32" />
            </Row>
            <Row>
              <NameCell>
                <Gutter $w={36}><path d="M10.5 10 V20 M10.5 10 H20" {...dotted} /><Folder x={21} /></Gutter>
                <NameLabel>未用项</NameLabel>
              </NameCell>
              <EmptyCells time="00:00:00" />
            </Row>
            <Row>
              <NameCell>
                <Gutter $w={52}><path d="M10.5 0 V7" {...dotted} /><Minus x={7} /><path d="M15 11.5 H21" {...dotted} /><Bang x={27} /><Folder x={37} /></Gutter>
                <NameLabel>PROGRAM</NameLabel>
              </NameCell>
              <EmptyCells time="00:17:32" />
            </Row>
            <Row>
              <NameCell>
                <Gutter $w={71}><path d="M29.5 0 V7" {...dotted} /><Minus x={25} /><path d="M33 11.5 H40" {...dotted} /><Bang x={46} /><Folder x={56} /></Gutter>
                <NameLabel>安周_1</NameLabel>
              </NameCell>
              <EmptyCells time="00:17:32" />
            </Row>
            {ops.map((o, i) => {
              const last = i === ops.length - 1;
              return (
                <Row key={i}>
                  <NameCell>
                    <Gutter $w={90}>
                      <path d={last ? "M48.5 0 V11.5 H58" : "M48.5 0 V20 M48.5 11.5 H58"} {...dotted} />
                      <Check />
                      <OpIcon t={o.icon} />
                    </Gutter>
                    <NameLabel $sel $focus={last}>{o.name}</NameLabel>
                  </NameCell>
                  <Cell $sel $pad={6} $focus={last}>{o.toolIc === "d" ? <DrillTool /> : o.toolIc === "m" ? <MillTool /> : null}</Cell>
                  <Cell $sel $pad={3} $focus={last}><PathCheck /></Cell>
                  <Cell $sel $focus={last}>{o.tool}</Cell>
                  <Cell $sel $focus={last}>{o.no}</Cell>
                  <Cell $sel $pad={2} $focus={last}>{o.time}</Cell>
                  <Cell $sel $focus={last}>{o.geo}</Cell>
                  <Cell $sel $focus={last}>METHOD</Cell>
                  <Cell $sel $focus={last} />
                </Row>
              );
            })}
            {Array.from({ length: 21 }).map((_, i) => (
              <Row key={i}>
                <NameCell />
                <EmptyCells />
              </Row>
            ))}
          </Table>
        </Navigator>
        <Viewer>
          <Tabs>
            <Tab $w={96}><MiniTabIc />欢迎页面</Tab>
            <Tab $w={105} $active>
              <PartIc />TTT.prt
              <svg width="12" height="12" viewBox="0 0 12 12"><path d="M1.5 1.5 H8 L10.5 4 V10.5 H1.5 Z M6 6 L11 2" fill="none" stroke="#fff" strokeWidth="1.4" /></svg>
              <svg width="12" height="12" viewBox="0 0 12 12" style={{ marginLeft: 2 }}><path d="M2 2 L10 10 M10 2 L2 10" stroke="#fff" strokeWidth="2" /></svg>
            </Tab>
          </Tabs>
          <Stage>
            <Vise />
            <Watermark>
              <MarkBig>3D世界网</MarkBig>
              <MarkSmall>WWW.3DSJW.COM</MarkSmall>
            </Watermark>
          </Stage>
        </Viewer>
      </Main>
    </Page>
  );
}
